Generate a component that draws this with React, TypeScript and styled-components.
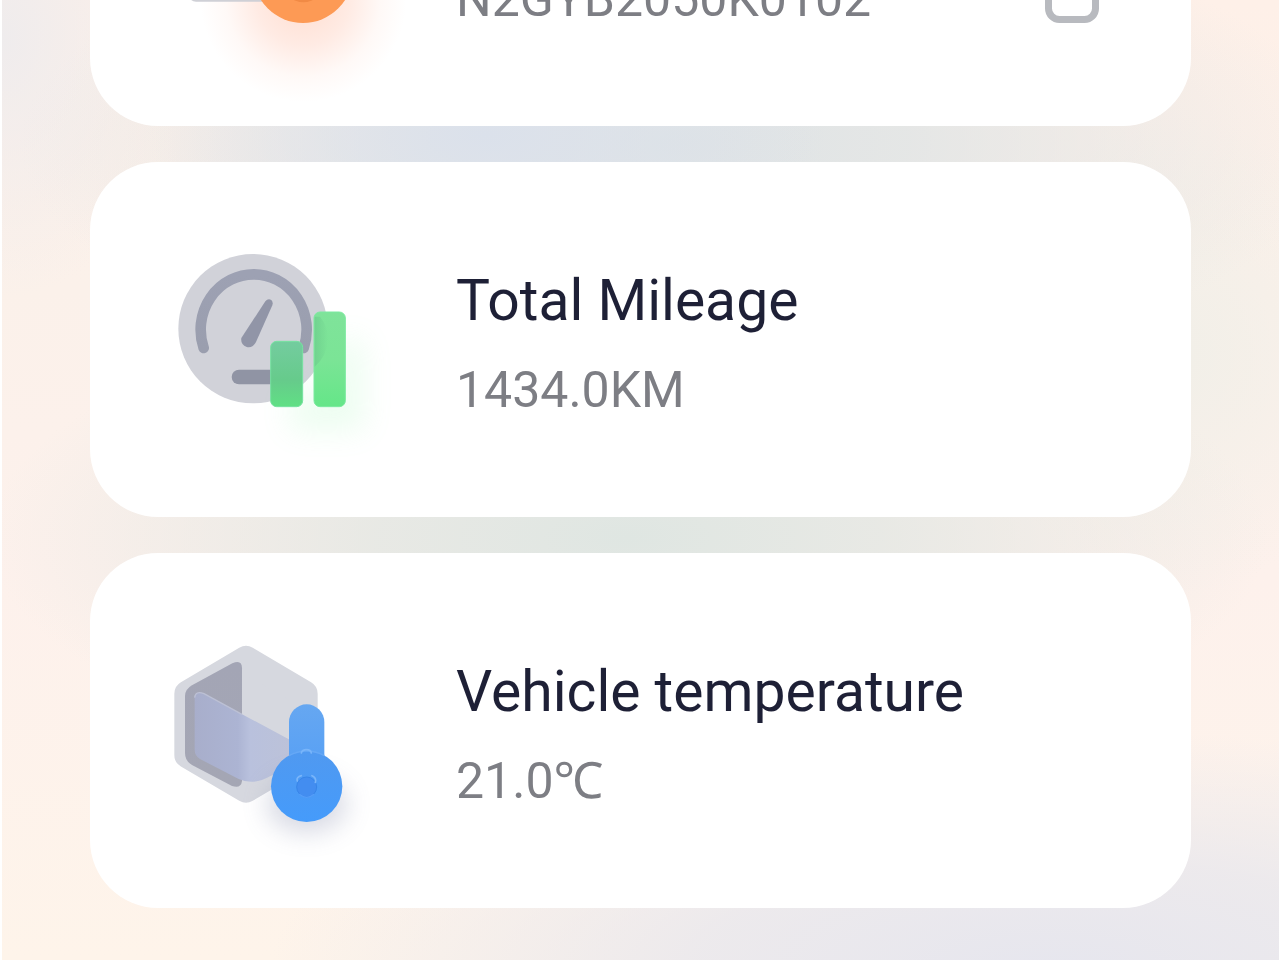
import React from "react";
import styled, { createGlobalStyle } from "styled-components";

const GlobalStyle = createGlobalStyle`
  * { box-sizing: border-box; }
  body { margin: 0; background: #fff; font-family: Roboto, "Noto Sans", "Noto Sans CJK SC", sans-serif; }
`;

const Screen = styled.main`
  height: 100vh;
  overflow: hidden;
  display: flex;
  flex-direction: column;
  justify-content: flex-end;
  gap: 36px;
  padding: 0 88px 52px;
  border: solid #fff;
  border-width: 0 1px 0 2px;
  background:
    radial-gradient(ellipse 340px 160px at 38% 14%, #dbe1eb 0%, #dbe1eb00 100%),
    radial-gradient(ellipse 660px 240px at 53% 15%, #dee3e5 0%, #dfe4e5cc 35%, #e2e5e300 100%),
    radial-gradient(ellipse 640px 240px at 49% 56%, #dfe6e2 0%, #e3e7e3cc 40%, #e6e8e300 100%),
    radial-gradient(ellipse 780px 240px at 82% 101%, #e6e6ee 0%, #e8e7edcc 45%, #eae8ec00 100%),
    radial-gradient(ellipse 180px 260px at 0% 4%, #efeced 0%, #efeced00 100%),
    radial-gradient(ellipse 200px 240px at 92% 37%, #f1efe8 0%, #f3f0e900 100%),
    linear-gradient(180deg, #fef0e8 0%, #fbf1ea 30%, #fdf1ec 60%, #fef4ea 100%);
`;

const Card = styled.section`
  flex: none;
  min-height: 355px;
  display: flex;
  align-items: flex-end;
  gap: 76px;
  padding: 0 92px 57px 70px;
  border-radius: 68px;
  background: #fff;
`;

const Picture = styled.svg`
  flex: none;
  width: 220px;
  height: 220px;
  overflow: visible;
`;

const Details = styled.div`
  flex: 1;
  min-width: 0;
  display: flex;
  flex-direction: column;
  gap: 26px;
  padding-bottom: 40px;
`;

const Title = styled.h2`
  margin: 0;
  font-size: 57px;
  line-height: 66px;
  font-weight: 400;
  color: #1e2036;
`;

const Value = styled.p`
  margin: 0;
  font-size: 50px;
  line-height: 60px;
  color: #7d7e84;
`;

const CopyButton = styled.button`
  flex: none;
  width: 54px;
  height: 54px;
  margin-bottom: 46px;
  padding: 0;
  border: 0;
  background: none;
  cursor: pointer;

  svg { display: block; }
`;

function VehicleCodeIcon() {
  return (
    <Picture viewBox="0 0 660 660" aria-hidden="true">
      <defs>
        <radialGradient id="orangeGlow">
          <stop offset="0" stopColor="#ff9a70" stopOpacity="0.34" />
          <stop offset="0.45" stopColor="#ff9a76" stopOpacity="0.2" />
          <stop offset="0.75" stopColor="#ff9a76" stopOpacity="0.06" />
          <stop offset="1" stopColor="#ff9a76" stopOpacity="0" />
        </radialGradient>
      </defs>
      <circle cx="430" cy="450" r="310" fill="url(#orangeGlow)" />
      <rect x="84" y="130" width="400" height="328" rx="24" fill="#cfd0d6" />
      <circle cx="429" cy="372" r="150" fill="#fd9a55" />
      <circle cx="430" cy="400" r="60" fill="#f18a45" />
    </Picture>
  );
}

function MileageIcon() {
  return (
    <Picture viewBox="0 0 660 660" aria-hidden="true">
      <defs>
        <linearGradient id="arc" x1="0" y1="0" x2="0" y2="1">
          <stop offset="0" stopColor="#9da1b3" />
          <stop offset="1" stopColor="#9a9eae" />
        </linearGradient>
        <linearGradient id="shortBar" x1="0" y1="0" x2="0" y2="1">
          <stop offset="0" stopColor="#74cc9f" />
          <stop offset="0.6" stopColor="#66cb8b" />
          <stop offset="1" stopColor="#60e084" />
        </linearGradient>
        <linearGradient id="tallBar" x1="0" y1="0" x2="0" y2="1">
          <stop offset="0" stopColor="#7fe39a" />
          <stop offset="0.5" stopColor="#7be496" />
          <stop offset="1" stopColor="#65e688" />
        </linearGradient>
        <linearGradient id="overlap" x1="0" y1="0" x2="1" y2="0">
          <stop offset="0" stopColor="#6ccb8c" stopOpacity="0.7" />
          <stop offset="1" stopColor="#6ccb8c" stopOpacity="0" />
        </linearGradient>
        <filter id="softGreen" x="-60%" y="-60%" width="220%" height="220%">
          <feGaussianBlur stdDeviation="44" />
        </filter>
      </defs>
      <circle cx="279" cy="266" r="224" fill="#d1d2d9" />
      <path d="M131 324A159 166 0 1 1 431 324" fill="none" stroke="url(#arc)" strokeWidth="32" strokeLinecap="round" />
      <path d="M316 184Q324 174 334 180Q340 186 337 196L288 306Q278 325 260 321Q241 314 244 294Z" fill="#9195a7" />
      <rect x="215" y="389" width="150" height="44" rx="22" fill="#9094a4" />
      <path d="M390 570H610V300H520V460H390Z" fill="#8cf5a4" opacity="0.16" filter="url(#softGreen)" />
      <rect x="332" y="304" width="96" height="196" rx="18" fill="url(#shortBar)" stroke="#76e2a1" strokeWidth="3" />
      <rect x="462" y="216" width="94" height="284" rx="18" fill="url(#tallBar)" stroke="#7bea9f" strokeWidth="3" />
      <path d="M464 230H480Q506 262 504 300Q500 350 464 380Z" fill="url(#overlap)" />
    </Picture>
  );
}

function TemperatureIcon() {
  return (
    <Picture viewBox="0 0 660 660" aria-hidden="true">
      <defs>
        <linearGradient id="side" x1="0" y1="0" x2="0" y2="1">
          <stop offset="0" stopColor="#a3a5b5" />
          <stop offset="1" stopColor="#a4a6b4" />
        </linearGradient>
        <linearGradient id="glass" x1="0" y1="0" x2="1" y2="0">
          <stop offset="0" stopColor="#a8aecb" />
          <stop offset="0.45" stopColor="#acb4d3" />
          <stop offset="0.58" stopColor="#b9c1dd" />
          <stop offset="1" stopColor="#bcc2d9" />
        </linearGradient>
        <linearGradient id="stem" x1="0" y1="0" x2="0" y2="1">
          <stop offset="0" stopColor="#66a7f1" />
          <stop offset="1" stopColor="#559ff5" />
        </linearGradient>
        <linearGradient id="bulb" x1="0" y1="0" x2="0" y2="1">
          <stop offset="0" stopColor="#5099f0" />
          <stop offset="1" stopColor="#459bfb" />
        </linearGradient>
        <filter id="softBlue" x="-60%" y="-60%" width="220%" height="220%">
          <feGaussianBlur stdDeviation="38" />
        </filter>
      </defs>
      <path d="M258 85L433 188V372L258 475L83 372V188Z" fill="#d6d8df" stroke="#d6d8df" strokeWidth="80" strokeLinejoin="round" />
      <path d="M217 97Q246 84 246 112V450Q243 474 216 465L96 402Q75 390 75 366V195Q76 174 96 163Z" fill="url(#side)" />
      <path d="M104 200Q106 178 132 188L392 328V408Q360 424 330 436Q280 464 236 444L120 384Q104 374 104 356Z" fill="url(#glass)" />
      <path d="M104 200Q106 178 132 188L246 250" fill="none" stroke="#bcc0d4" strokeWidth="4" />
      <ellipse cx="440" cy="520" rx="120" ry="85" fill="#7d83a6" opacity="0.3" filter="url(#softBlue)" />
      <rect x="387" y="220" width="106" height="220" rx="53" fill="url(#stem)" />
      <circle cx="440" cy="466" r="107" fill="url(#bulb)" />
      <path d="M387 374Q412 360 440 360Q468 360 493 374" fill="none" stroke="#66a8f6" strokeWidth="4" />
      <circle cx="440" cy="468" r="30" fill="#438df0" stroke="#3785e8" strokeWidth="3" />
      <path d="M412 450Q408 438 424 434M456 434Q470 440 466 454M424 366Q426 356 440 356Q452 356 454 366" fill="none" stroke="#79b5fa" strokeWidth="5" strokeLinecap="round" />
      <path d="M418 490Q440 508 462 490" fill="none" stroke="#559df8" strokeWidth="4" />
    </Picture>
  );
}

export default function App() {
  return (
    <>
      <GlobalStyle />
      <Screen>
        <Card>
          <VehicleCodeIcon />
          <Details>
            <Value>N2GYB2050K0102</Value>
          </Details>
          <CopyButton type="button" aria-label="Copy">
            <svg width="54" height="54" viewBox="0 0 54 54" fill="none" aria-hidden="true">
              <rect x="3.5" y="3.5" width="47" height="47" rx="11" stroke="#b8babf" strokeWidth="7" />
            </svg>
          </CopyButton>
        </Card>
        <Card>
          <MileageIcon />
          <Details>
            <Title>Total Mileage</Title>
            <Value>1434.0KM</Value>
          </Details>
        </Card>
        <Card>
          <TemperatureIcon />
          <Details>
            <Title>Vehicle temperature</Title>
            <Value>21.0℃</Value>
          </Details>
        </Card>
      </Screen>
    </>
  );
}
